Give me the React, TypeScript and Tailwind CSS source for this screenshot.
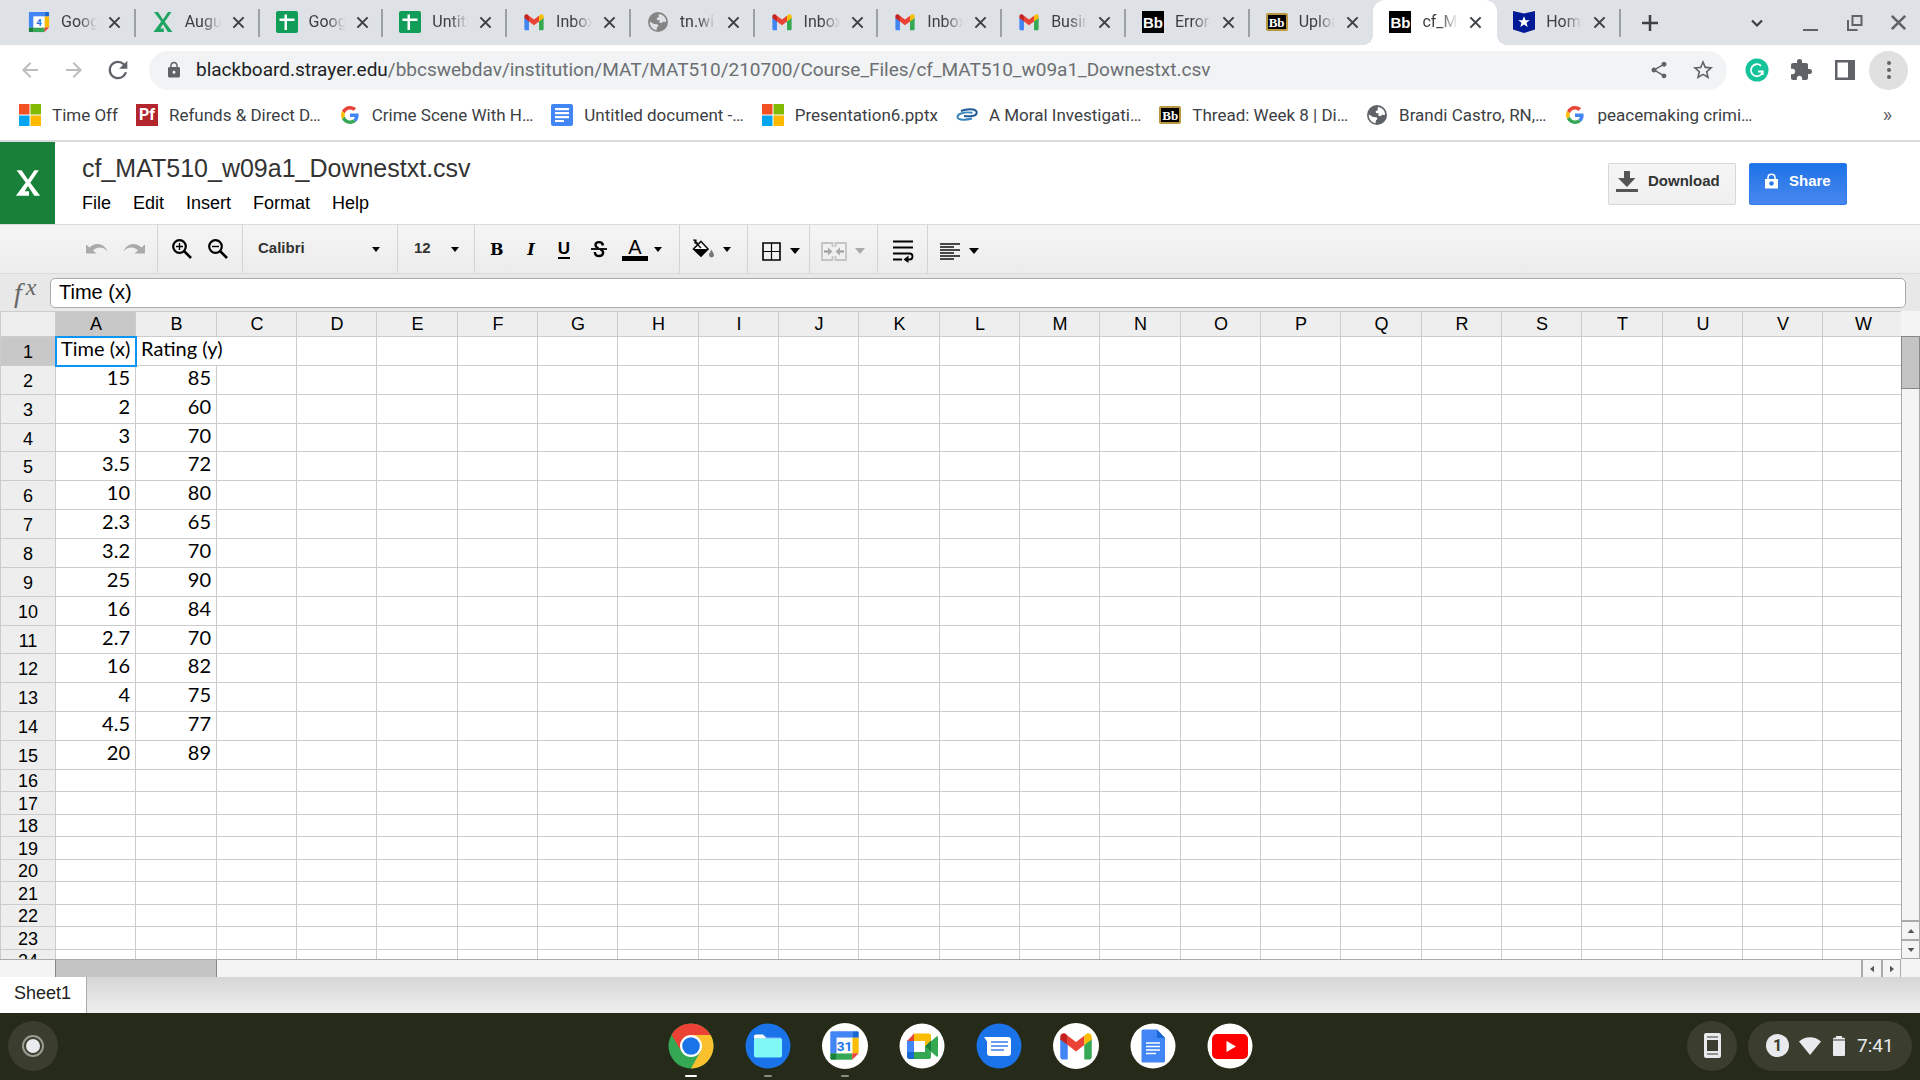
import React from 'react';
import {
  MdShare,
  MdStarBorder,
  MdExtension,
  MdLock,
  MdRefresh,
  MdArrowBack,
  MdArrowForward,
} from 'react-icons/md';

const sans = "font-['Liberation_Sans',sans-serif]";
const roboto = 'font-[Roboto,sans-serif]';

/* ---------- logos ---------- */

function CalendarLogo({ day, className }: { day: string; className: string }) {
  return (
    <svg viewBox="0 0 24 24" className={className} aria-hidden="true">
      <path d="M2 1h16v5H6v12H1V2a1 1 0 0 1 1-1z" fill="#4285f4" />
      <path d="M18 1h4a1 1 0 0 1 1 1v4h-5z" fill="#1967d2" />
      <path d="M18 6h5v12h-5z" fill="#fbbc04" />
      <path d="M6 18h12v5H6z" fill="#34a853" />
      <path d="M1 18h5v5H2a1 1 0 0 1-1-1z" fill="#188038" />
      <path d="M18 18h5l-5 5z" fill="#ea4335" />
      <path d="M6 6h12v12H6z" fill="#fff" />
      <text x="12" y="16" textAnchor="middle" fontFamily="Roboto" fontWeight="700" fontSize="10.5" fill="#1a73e8">
        {day}
      </text>
    </svg>
  );
}

function GmailLogo({ className }: { className: string }) {
  return (
    <svg viewBox="0 0 24 24" className={className} aria-hidden="true">
      <path d="M1.500 7v12.500c0 .8.7 1.500 1.500 1.500h3.500V11z" fill="#4285f4" />
      <path d="M22.500 7v12.500c0 .8-.7 1.500-1.500 1.500h-3.500V11z" fill="#34a853" />
      <path d="M6.500 5.200L12 9.400l5.500-4.200v6.200L12 15.600l-5.500-4.200z" fill="#ea4335" />
      <path d="M1.500 6c0-2.700 3-3.500 4.500-1.200l.5.4v6.200L1.500 7.700z" fill="#c5221f" />
      <path d="M22.500 6c0-2.700-3-3.500-4.500-1.200l-.5.4v6.200l5-3.700z" fill="#fbbc04" />
    </svg>
  );
}

function SheetsLogo({ className }: { className: string }) {
  return (
    <svg viewBox="0 0 22 22" className={className} aria-hidden="true">
      <rect width="22" height="22" rx="2" fill="#0f9d58" />
      <path d="M3.500 7.500h15v2.500h-15zM8.500 3.500H11v15.500H8.500z" fill="#fff" />
    </svg>
  );
}

function ExcelMark({ color, className }: { color: string; className: string }) {
  return (
    <svg viewBox="0 0 22 22" className={className} aria-hidden="true">
      <path
        d="M2 1h4l5 7.500L16 1h3.500l-6.700 9.800L20.500 21h-4.600L11 13.300 8.400 17.400h3.400V21H1.500l7.700-10.400z"
        fill={color}
      />
    </svg>
  );
}

function GlobeIcon({ className, land }: { className: string; land: string }) {
  return (
    <svg viewBox="0 0 20 20" className={className} aria-hidden="true">
      <circle cx="10" cy="10" r="10" fill="currentColor" />
      <path d="M1.800 9.500L6 12l3.500.2 1 1.800-1.500 1.200-.5 3C4.500 17.500 1.500 14 1.800 9.500z" fill={land} />
      <path d="M11.500 1.900c3 .5 5.200 2.400 6.200 5l.4 3.100-3.100-.3-1.500 1.500-2.500-1L12 8.500 9 8 8.700 6l2.300-.7-.5-2z" fill={land} />
    </svg>
  );
}

function WindowsLogo() {
  return (
    <svg viewBox="0 0 22 22" className="size-[22px]" aria-hidden="true">
      <path d="M0 0h10.500v10.500H0z" fill="#f25022" />
      <path d="M11.500 0H22v10.500H11.500z" fill="#7fba00" />
      <path d="M0 11.500h10.500V22H0z" fill="#00a4ef" />
      <path d="M11.500 11.500H22V22H11.500z" fill="#ffb900" />
    </svg>
  );
}

function GoogleLogo() {
  return (
    <svg viewBox="0 0 48 48" className="size-[18px]" aria-hidden="true">
      <path fill="#EA4335" d="M24 9.500c3.540 0 6.710 1.220 9.210 3.600l6.850-6.850C35.900 2.380 30.470 0 24 0 14.620 0 6.510 5.380 2.560 13.220l7.980 6.190C12.430 13.720 17.740 9.500 24 9.500z" />
      <path fill="#4285F4" d="M46.980 24.550c0-1.570-.15-3.090-.38-4.550H24v9.020h12.940c-.58 2.960-2.260 5.480-4.780 7.180l7.730 6c4.510-4.180 7.090-10.360 7.090-17.650z" />
      <path fill="#FBBC05" d="M10.530 28.590c-.48-1.450-.76-2.990-.76-4.590s.27-3.140.76-4.590l-7.980-6.190C.92 16.460 0 20.120 0 24c0 3.880.92 7.540 2.560 10.780l7.970-6.190z" />
      <path fill="#34A853" d="M24 48c6.480 0 11.930-2.130 15.890-5.810l-7.730-6c-2.150 1.450-4.920 2.300-8.160 2.300-6.260 0-11.570-4.220-13.470-9.910l-7.980 6.190C6.510 42.620 14.620 48 24 48z" />
    </svg>
  );
}

function DocsMark() {
  return (
    <svg viewBox="0 0 22 22" className="size-[22px]" aria-hidden="true">
      <rect width="22" height="22" rx="2" fill="#4285f4" />
      <path d="M4 4h14v2.200H4zM4 8h14v2.200H4zM4 12h14v2.200H4zM4 16h9v2H4z" fill="#fff" />
    </svg>
  );
}

function Swoosh() {
  return (
    <svg viewBox="0 0 22 22" className="size-[22px]" fill="none" aria-hidden="true">
      <path d="M5 7c4-1.500 8-2 12-1.500 5.500 1 4.500 6-.5 6.500-3 .4-6 .3-8.500 0" stroke="#1f5a96" strokeWidth="1.900" />
      <path d="M16.500 8.800C12 8 8 8.500 5 9.500c-5 1.700-4.500 5.500 0 6 4 .5 7.500 0 11-1" stroke="#3d86bd" strokeWidth="1.900" />
    </svg>
  );
}

function BbBlack() {
  return (
    <span className={`${sans} flex size-[22px] items-center justify-center bg-black text-[15px] leading-none font-bold text-white`}>
      Bb
    </span>
  );
}

function BbGold() {
  return (
    <span className="flex h-[18px] w-[22px] items-center justify-center rounded-xs border-2 border-[#b8973f] bg-black font-['Liberation_Serif',serif] text-[13px] leading-none font-bold text-white">
      Bb
    </span>
  );
}

function PfMark() {
  return (
    <span className={`${roboto} flex size-[22px] items-center justify-center bg-[#b3262e] text-base leading-none font-bold text-white`}>
      Pf
    </span>
  );
}

function StarBadge() {
  return (
    <svg viewBox="0 0 22 22" className="size-[22px]" aria-hidden="true">
      <path d="M0 0l11 2.500L22 0v18.500L11 22 0 18.500z" fill="#001a96" />
      <path d="M11 5.200l1.600 4h4.200l-3.300 2.600 1.200 4.200L11 13.500 7.300 16l1.200-4.200-3.300-2.600h4.200z" fill="#fff" />
    </svg>
  );
}

function CloseIcon({ className }: { className: string }) {
  return (
    <svg viewBox="0 0 14 14" className={className} fill="none" stroke="currentColor" strokeWidth="2.200" aria-hidden="true">
      <path d="M1.500 1.500l11 11M12.500 1.500l-11 11" />
    </svg>
  );
}

/* ---------- tab strip ---------- */

type Tab = { title: string; icon: React.ReactNode; active?: boolean };

const tabs: Tab[] = [
  { title: 'Goog', icon: <CalendarLogo day="4" className="size-6" /> },
  { title: 'Augu', icon: <ExcelMark color="#1fa463" className="size-[22px]" /> },
  { title: 'Goog', icon: <SheetsLogo className="size-[22px]" /> },
  { title: 'Untitl', icon: <SheetsLogo className="size-[22px]" /> },
  { title: 'Inbox', icon: <GmailLogo className="size-[22px]" /> },
  { title: 'tn.wi', icon: <GlobeIcon className="size-5 text-[#858585]" land="#dee1e6" /> },
  { title: 'Inbox', icon: <GmailLogo className="size-[22px]" /> },
  { title: 'Inbox', icon: <GmailLogo className="size-[22px]" /> },
  { title: 'Busin', icon: <GmailLogo className="size-[22px]" /> },
  { title: 'Error', icon: <BbBlack /> },
  { title: 'Uploa', icon: <BbGold /> },
  { title: 'cf_M', icon: <BbBlack />, active: true },
  { title: 'Hom', icon: <StarBadge /> },
];

function TabStrip() {
  return (
    <div className="flex h-[45px] shrink-0 items-stretch bg-[#dee1e6] pl-3">
      <div role="tablist" className="flex w-[1609px] shrink">
        {tabs.map((t, i) => (
          <div
            key={i}
            role="tab"
            aria-selected={!!t.active}
            className={
              t.active
                ? 'relative flex min-w-0 flex-1 items-center rounded-t-xl bg-white pb-px pl-4'
                : 'relative flex min-w-0 flex-1 items-center pb-px pl-4'
            }
          >
            <span className="flex size-[22px] shrink-0 items-center justify-center">{t.icon}</span>
            <span className="ml-[11px] w-9 [mask-image:linear-gradient(to_right,black_50%,transparent)] text-base leading-6 whitespace-nowrap text-[#3c4043]">
              {t.title}
            </span>
            <button aria-label={`Close ${t.title}`} className="ml-[11px] text-[#3c4043]">
              <CloseIcon className="size-[13px]" />
            </button>
            {t.active ? (
              <>
                <span className="absolute bottom-0 -left-2.5 size-2.5 bg-[radial-gradient(circle_at_top_left,transparent_10px,white_10px)]" />
                <span className="absolute -right-2.5 bottom-0 size-2.5 bg-[radial-gradient(circle_at_top_right,transparent_10px,white_10px)]" />
              </>
            ) : (
              tabs[i + 1]?.active || <span className="absolute top-[9px] right-0 h-7 w-0.5 bg-[#9aa0a6]" />
            )}
          </div>
        ))}
      </div>
      <button aria-label="New tab" className="ml-5 text-[#3c4043]">
        <svg viewBox="0 0 18 18" className="size-[18px]" stroke="currentColor" strokeWidth="2.500">
          <path d="M9 1v16M1 9h16" />
        </svg>
      </button>
      <div className="ml-auto flex items-center gap-7 pr-[13px] text-[#5f6368]">
        <button aria-label="Search tabs" className="text-[#3c4043]">
          <svg viewBox="0 0 18 18" className="size-[18px]" fill="none" stroke="currentColor" strokeWidth="2.200">
            <path d="M4 6.500l5 5 5-5" />
          </svg>
        </button>
        <button aria-label="Minimize" className="ml-1.5">
          <svg viewBox="0 0 18 18" className="size-[18px]" stroke="currentColor" strokeWidth="2">
            <path d="M3 16h15" />
          </svg>
        </button>
        <button aria-label="Restore" className="-mr-0.5">
          <svg viewBox="0 0 18 18" className="size-[18px]" fill="none" stroke="currentColor" strokeWidth="2">
            <path d="M6.500 2h9v9h-9zM2 6v10h9.500" />
          </svg>
        </button>
        <button aria-label="Close window">
          <CloseIcon className="size-[17px]" />
        </button>
      </div>
    </div>
  );
}

/* ---------- address bar ---------- */

function AddressBar() {
  return (
    <div className="flex h-[51px] shrink-0 items-center bg-white pr-3 pb-px pl-[18px] text-[#5f6368]">
      <button aria-label="Back" className="text-[#babcbe]">
        <MdArrowBack className="size-6" />
      </button>
      <button aria-label="Forward" className="ml-5 text-[#babcbe]">
        <MdArrowForward className="size-6" />
      </button>
      <button aria-label="Reload" className="ml-[18px]">
        <MdRefresh className="size-7" />
      </button>
      <div className="ml-[17px] flex h-[39px] flex-1 items-center rounded-full bg-[#f1f3f4] pr-3 pl-4">
        <MdLock className="size-[18px]" />
        <a href="#" className="ml-[13px] flex-1 text-[19px] leading-6 text-[#6b6f73]">
          <span className="text-[#202124]">blackboard.strayer.edu</span>
          /bbcswebdav/institution/MAT/MAT510/210700/Course_Files/cf_MAT510_w09a1_Downestxt.csv
        </a>
        <button aria-label="Share page">
          <MdShare className="size-5" />
        </button>
        <button aria-label="Bookmark page" className="ml-[22px]">
          <MdStarBorder className="size-6" />
        </button>
      </div>
      <button aria-label="Grammarly" className="ml-[18px]">
        <svg viewBox="0 0 24 24" className="size-6" fill="none">
          <circle cx="12" cy="12" r="11.500" fill="#15c39a" />
          <path d="M16 7.800A6 6 0 1 0 17.800 13.500H13M17.800 13v4" stroke="#fff" strokeWidth="1.800" />
        </svg>
      </button>
      <button aria-label="Extensions" className="ml-5">
        <MdExtension className="size-6" />
      </button>
      <button aria-label="Side panel" className="ml-[22px]">
        <svg viewBox="0 0 20 20" className="size-5" aria-hidden="true">
          <path d="M0 0h20v20H0zM2.500 2.500v15H13v-15z" fill="currentColor" fillRule="evenodd" />
        </svg>
      </button>
      <button aria-label="Menu" className="ml-3.5 flex size-[39px] items-center justify-center rounded-full bg-[#e0e0e0]">
        <svg viewBox="0 0 6 20" className="h-5 w-1.5" fill="currentColor">
          <circle cx="3" cy="3" r="2" />
          <circle cx="3" cy="10" r="2" />
          <circle cx="3" cy="17" r="2" />
        </svg>
      </button>
    </div>
  );
}

const bookmarks: { title: string; icon: React.ReactNode }[] = [
  { title: 'Time Off', icon: <WindowsLogo /> },
  { title: 'Refunds & Direct D…', icon: <PfMark /> },
  { title: 'Crime Scene With H…', icon: <GoogleLogo /> },
  { title: 'Untitled document -…', icon: <DocsMark /> },
  { title: 'Presentation6.pptx', icon: <WindowsLogo /> },
  { title: 'A Moral Investigati…', icon: <Swoosh /> },
  { title: 'Thread: Week 8 | Di…', icon: <BbGold /> },
  { title: 'Brandi Castro, RN,…', icon: <GlobeIcon className="size-5 text-[#5f6368]" land="#fff" /> },
  { title: 'peacemaking crimi…', icon: <GoogleLogo /> },
];

function BookmarkBar() {
  return (
    <nav aria-label="Bookmarks" className="flex h-[46px] shrink-0 items-center gap-[18px] border-b-2 border-[#dadbdc] bg-white pr-7 pb-1.5 pl-[19px]">
      {bookmarks.map((b, i) => (
        <a key={i} href="#" className="flex items-center gap-[11px] text-[17px] leading-6 whitespace-nowrap text-[#3c4043]">
          <span className="flex size-[22px] items-center justify-center">{b.icon}</span>
          {b.title}
        </a>
      ))}
      <button aria-label="More bookmarks" className="ml-auto text-xl leading-6 text-[#5f6368]">
        »
      </button>
    </nav>
  );
}

/* ---------- document header ---------- */

function DocHeader() {
  return (
    <header className={`${sans} flex h-[82px] shrink-0 bg-white`}>
      <div className="flex w-[55px] items-center justify-center bg-[#188038]">
        <ExcelMark color="#fff" className="h-8 w-7" />
      </div>
      <div className="ml-[27px] flex-1 pt-2.5">
        <h1 className="text-[25px] leading-8 text-[#333]">cf_MAT510_w09a1_Downestxt.csv</h1>
        <nav className="mt-[7px] flex gap-[22px] text-lg leading-6 text-black">
          {['File', 'Edit', 'Insert', 'Format', 'Help'].map((m) => (
            <button key={m}>{m}</button>
          ))}
        </nav>
      </div>
      <div className="mr-[73px] flex gap-[13px] pt-[21px] text-[15px] leading-5 font-bold">
        <button className="flex h-[42px] w-32 items-center gap-2.5 rounded-xs border border-[#d8d8d8] bg-linear-to-b from-[#f5f5f5] to-[#f0f0f0] pb-1.5 pl-[7px] text-[#333]">
          <svg viewBox="0 0 22 22" className="size-[22px]" fill="#555" aria-hidden="true">
            <path d="M8 1h6v7h5.500L11 17 2 8h6zM0 19h22v3H0z" />
          </svg>
          Download
        </button>
        <button className="flex h-[42px] w-[98px] items-center gap-[11px] rounded-xs border border-[#3079ed] bg-linear-to-b from-[#1a73e8] to-[#4787ed] pb-1.5 pl-[15px] text-white">
          <svg viewBox="0 0 13 16" className="h-4 w-[13px]" aria-hidden="true">
            <path d="M3 7V4.500C3 0 10 0 10 4.500V7" fill="none" stroke="#fff" strokeWidth="1.500" />
            <path d="M0 6h13v9.500H0z" fill="#fff" />
            <circle cx="6.500" cy="10.500" r="2.300" fill="#2f7bea" />
          </svg>
          Share
        </button>
      </div>
    </header>
  );
}

/* ---------- toolbar ---------- */

function Caret({ className }: { className: string }) {
  return (
    <svg viewBox="0 0 10 6" className={className} fill="currentColor" aria-hidden="true">
      <path d="M0 0h10L5 6z" />
    </svg>
  );
}

function UndoArrow({ className }: { className: string }) {
  return (
    <svg viewBox="0 0 22 12" className={className} fill="#aaa" aria-hidden="true">
      <path d="M0 1.500l3.500 3C9-.8 17.500-.5 21.500 8 16.500 3.500 11 3.500 7 7.500l3.500 3H0z" />
    </svg>
  );
}

function Magnifier({ sign }: { sign: string }) {
  return (
    <svg viewBox="0 0 20 20" className="size-5" fill="none" stroke="currentColor" aria-hidden="true">
      <circle cx="7.500" cy="7.500" r="6.300" strokeWidth="2.200" />
      <path d="M12 12l7 7" strokeWidth="2.600" />
      <path d={sign} strokeWidth="1.400" />
    </svg>
  );
}

const group = 'flex h-full items-center border-r border-[#d4d4d4]';

function Toolbar() {
  return (
    <div
      role="toolbar"
      className={`${sans} flex h-[50px] shrink-0 items-center border-y border-[#dcdcdc] bg-linear-to-b from-[#f5f5f5] to-[#ececec] text-[15px] leading-5 font-bold text-black`}
    >
      <div className={`${group} w-[158px] gap-[15px] pl-[86px]`}>
        <button aria-label="Undo">
          <UndoArrow className="h-3 w-[22px]" />
        </button>
        <button aria-label="Redo">
          <UndoArrow className="h-3 w-[22px] -scale-x-100" />
        </button>
      </div>
      <div className={`${group} w-[85px] gap-4 pl-3.5`}>
        <button aria-label="Zoom in">
          <Magnifier sign="M4 7.500h7M7.500 4v7" />
        </button>
        <button aria-label="Zoom out">
          <Magnifier sign="M4 7.500h7" />
        </button>
      </div>
      <div className={`${group} w-[155px] pb-0.5 pl-[15px]`}>
        <button className="flex flex-1 items-center justify-between pr-[17px] text-[#333]">
          Calibri
          <Caret className="mt-0.5 h-[5px] w-2 text-black" />
        </button>
      </div>
      <div className={`${group} w-[77px] pb-0.5 pl-4`}>
        <button className="flex flex-1 items-center justify-between pr-[15px] text-[#333]">
          12
          <Caret className="mt-0.5 h-[5px] w-2 text-black" />
        </button>
      </div>
      <div className={`${group} w-[205px] pl-[15px]`}>
        <button aria-label="Bold" className="w-[18px] pt-0.5 text-left font-['DejaVu_Serif',serif] text-base">
          B
        </button>
        <button aria-label="Italic" className="ml-[13px] w-5 pt-0.5 text-center font-['DejaVu_Serif',serif] text-base italic">
          I
        </button>
        <button aria-label="Underline" className="ml-[15px] flex w-4 flex-col items-center pt-0.5">
          <span className="border-b-2 border-black text-[17px] leading-4">U</span>
        </button>
        <button aria-label="Strikethrough" className="ml-[18px] w-[18px] text-center">
          <svg viewBox="0 0 18 18" className="size-[18px]" fill="none" stroke="currentColor" strokeWidth="2.400">
            <path d="M13 5.500C12.500 1 5.500 1.200 5.500 5c0 1.500 1 2.500 3 3.300M10.500 9.500c4.500 2 2.500 6.500-1.500 6.500-2.500 0-4-1.500-4.200-4" />
            <path d="M1 9h16" strokeWidth="1.800" />
          </svg>
        </button>
        <button aria-label="Text color" className="ml-3.5 flex items-center gap-1.5">
          <span className="w-[26px] border-b-5 border-black text-center text-xl leading-[18px] font-normal">A</span>
          <Caret className="h-[5px] w-2" />
        </button>
      </div>
      <div className={`${group} w-[68px] pl-[11px]`}>
        <button aria-label="Fill color" className="flex items-center gap-2">
          <svg viewBox="0 0 24 22" className="h-[22px] w-6" aria-hidden="true">
            <path d="M2.500 1.500L8 7M5 1.500l-1 4" stroke="#111" strokeWidth="1.600" />
            <path d="M10 3.500l7 7.500-7 7-7.500-7z" fill="#fff" stroke="#111" strokeWidth="1.600" />
            <path d="M2 11h15.500L10 19z" fill="#000" />
            <path d="M4 4l6 6" stroke="#111" strokeWidth="1.500" />
            <path d="M20.500 11.500c1.500 3 2.500 4.200 2.500 5.500a2.500 2.500 0 0 1-5 0c0-1.300 1-2.500 2.500-5.500z" fill="#777" />
          </svg>
          <Caret className="h-[5px] w-2" />
        </button>
      </div>
      <div className={`${group} w-[62px] pt-1 pl-3.5`}>
        <button aria-label="Borders" className="flex items-center gap-[9px]">
          <svg viewBox="0 0 19 19" className="size-[19px]" fill="none" stroke="#000" aria-hidden="true">
            <path d="M1 1h17v17H1z" strokeWidth="1.600" />
            <path d="M9.500 1v17M1 9.500h17" strokeWidth="1.200" />
          </svg>
          <Caret className="h-1.5 w-2.5" />
        </button>
      </div>
      <div className={`${group} w-[68px] pt-1 pl-[11px] text-[#aaa]`}>
        <button aria-label="Merge cells" className="flex items-center gap-2">
          <svg viewBox="0 0 26 19" className="h-[19px] w-[26px]" fill="none" stroke="#c4c4c4" strokeWidth="1.800" aria-hidden="true">
            <path d="M11.500 5V1H1v17h10.500v-4M14.500 5V1H25v17H14.500v-4" />
            <path d="M3 9.500h4M23 9.500h-4" stroke="#999" />
            <path d="M7 5.500l4.500 4L7 13.500zM19 5.500l-4.500 4 4.500 4z" fill="#aaa" stroke="none" />
          </svg>
          <Caret className="h-1.5 w-2.5" />
        </button>
      </div>
      <div className={`${group} w-[50px] pt-1 pl-[15px]`}>
        <button aria-label="Wrap text">
          <svg viewBox="0 0 21 23" className="h-[23px] w-[21px]" fill="none" stroke="#000" strokeWidth="1.800" aria-hidden="true">
            <path d="M0 1.500h20M0 7.500h20M0 13.500h16.500c4 0 4 6 0 6H14M0 19.500h9" />
            <path d="M15.500 15.500v7.500L10.500 19.500z" fill="#000" stroke="none" />
          </svg>
        </button>
      </div>
      <div className="flex h-full items-center pt-1 pl-3">
        <button aria-label="Align" className="flex items-center gap-[9px]">
          <svg viewBox="0 0 20 17" className="h-[17px] w-5" stroke="#111" strokeWidth="1.600" aria-hidden="true">
            <path d="M0 1h20M0 4h14M0 7h20M0 10h14M0 13h20M0 16h14" />
          </svg>
          <Caret className="h-1.5 w-2.5" />
        </button>
      </div>
    </div>
  );
}

function FormulaBar() {
  return (
    <div className={`${sans} flex h-[37px] shrink-0 items-center bg-[#e8e8e8] pr-3.5`}>
      <label htmlFor="formula" className="flex w-[50px] gap-1 pl-3.5 font-['Liberation_Serif',serif] text-[28px] leading-8 text-[#666] italic">
        <span>f</span>
        <span className="text-2xl leading-5">x</span>
      </label>
      <input
        id="formula"
        defaultValue="Time (x)"
        className="h-[30px] min-w-0 flex-1 rounded-[5px] border border-[#aaa] bg-white px-2 text-xl leading-6 text-black"
      />
    </div>
  );
}

/* ---------- sheet ---------- */

const columns = 'ABCDEFGHIJKLMNOPQRSTUVW'.split('');

const data: [string, string][] = [
  ['Time (x)', 'Rating (y)'],
  ['15', '85'],
  ['2', '60'],
  ['3', '70'],
  ['3.5', '72'],
  ['10', '80'],
  ['2.3', '65'],
  ['3.2', '70'],
  ['25', '90'],
  ['16', '84'],
  ['2.7', '70'],
  ['16', '82'],
  ['4', '75'],
  ['4.5', '77'],
  ['20', '89'],
];

function rowHeight(r: number) {
  if (r > 15) return r % 2 ? 'h-[23px]' : 'h-[22px]';
  return r === 4 || r === 11 ? 'h-7' : 'h-[29px]';
}

function cellClass(r: number, c: number) {
  if (r === 1 && c === 0) return 'border-r border-b border-[#ccc] pl-[5px] outline-2 -outline-offset-1 outline-[#0b96f5] relative';
  if (r === 1 && c === 1) return 'border-b border-[#ccc] pl-[5px] overflow-visible';
  if (c < 2) return 'border-r border-b border-[#ccc] pr-[5px] text-right';
  return 'border-r border-b border-[#ccc]';
}

function Sheet() {
  return (
    <div className="flex min-h-0 flex-1">
      <div className="flex min-w-0 flex-1 flex-col">
        <div className="min-h-0 flex-1 overflow-hidden border-b border-[#aaa] bg-white">
          <table className={`${sans} w-px table-fixed border-separate border-spacing-0 text-lg leading-5 text-black`}>
            <colgroup>
              <col className="w-14" />
              {columns.map((c, i) => (
                <col key={c} className={i % 3 === 1 ? 'w-[81px]' : 'w-20'} />
              ))}
            </colgroup>
            <thead>
              <tr className="h-[26px] bg-[#eee]">
                <td className="border border-[#ccc]" />
                {columns.map((c, i) => (
                  <th
                    key={c}
                    scope="col"
                    className={
                      i === 0
                        ? 'border-y border-r border-[#ccc] bg-[#c8c8c8] p-0 pl-px font-normal'
                        : 'border-y border-r border-[#ccc] p-0 pl-px font-normal'
                    }
                  >
                    {c}
                  </th>
                ))}
              </tr>
            </thead>
            <tbody>
              {Array.from({ length: 24 }, (_, i) => i + 1).map((r) => (
                <tr key={r} className={rowHeight(r)}>
                  <th
                    scope="row"
                    className={
                      r === 1
                        ? 'border-x border-b border-[#ccc] bg-[#c8c8c8] p-0 pt-0.5 font-normal'
                        : r <= 15
                          ? 'border-x border-b border-[#ccc] bg-[#eee] p-0 pt-0.5 font-normal'
                          : 'border-x border-b border-[#ccc] bg-[#eee] p-0 pt-px font-normal'
                    }
                  >
                    {r}
                  </th>
                  {columns.map((c, ci) => (
                    <td
                      key={c}
                      className={
                        r > 15
                          ? 'border-r border-b border-[#ccc] p-0'
                          : `${cellClass(r, ci)} pt-0 pb-1.5 font-[Lato,sans-serif] text-xl leading-5 whitespace-nowrap`
                      }
                    >
                      {data[r - 1]?.[ci]}
                    </td>
                  ))}
                </tr>
              ))}
            </tbody>
          </table>
        </div>
        <div className="flex h-[17px] shrink-0 bg-[#f4f4f4] pl-[55px]">
          <div className="w-[162px] border-x border-[#888] bg-[#c4c4c4]" />
          <button aria-label="Scroll left" className="ml-auto flex w-5 items-center justify-center border-l-2 border-[#aaa] text-[#555]">
            <Caret className="h-1 w-2 rotate-90" />
          </button>
          <button aria-label="Scroll right" className="flex w-5 items-center justify-center border-r border-l-2 border-[#aaa] text-[#555]">
            <Caret className="h-1 w-2 -rotate-90" />
          </button>
        </div>
      </div>
      <div className="flex w-[19px] shrink-0 flex-col bg-[#f4f4f4] pt-[25px] pb-[18px]">
        <div className="h-[53px] border border-[#888] bg-[#c4c4c4]" />
        <div className="flex-1 border-x border-[#aaa]" />
        <button aria-label="Scroll up" className="flex h-5 items-center justify-center border border-t-2 border-[#aaa] text-[#555]">
          <Caret className="h-1 w-2 rotate-180" />
        </button>
        <button aria-label="Scroll down" className="flex h-[19px] items-center justify-center border border-[#aaa] text-[#555]">
          <Caret className="h-1 w-2" />
        </button>
      </div>
    </div>
  );
}

function SheetTabs() {
  return (
    <div className={`${sans} flex h-9 shrink-0 bg-linear-to-b from-[#d6d6d6] to-[#efefef]`}>
      <button className="border-r border-[#aaa] bg-white pr-[15px] pb-1 pl-3.5 text-lg leading-6 text-[#222]">Sheet1</button>
    </div>
  );
}

/* ---------- shelf ---------- */

function ChromeIcon() {
  return (
    <svg viewBox="0 0 46 46" className="size-[46px]" aria-hidden="true">
      <circle cx="23" cy="23" r="22.500" fill="#34a853" />
      <path d="M23 12h19.600A22.500 22.500 0 0 1 23 45.500L32.500 28.500z" fill="#fbc02d" />
      <path d="M3.500 11.800A22.500 22.500 0 0 1 42.600 12H23L13.500 28.500z" fill="#ea4335" />
      <circle cx="23" cy="23" r="11" fill="#fff" />
      <circle cx="23" cy="23" r="8.800" fill="#1a73e8" />
    </svg>
  );
}

function FilesIcon() {
  return (
    <svg viewBox="0 0 46 46" className="size-[46px]" aria-hidden="true">
      <circle cx="23" cy="23" r="22.500" fill="#1a73e8" />
      <path d="M11 12h8l3 2.500h13a2 2 0 0 1 2 2V20H9v-6a2 2 0 0 1 2-2z" fill="#8ab4f8" />
      <path d="M11 11.500h7l3 4H9v-2a2 2 0 0 1 2-2z" fill="#fff" />
      <rect x="9" y="15.500" width="28" height="19" rx="2" fill="#80f8f8" />
    </svg>
  );
}

function MeetIcon() {
  return (
    <svg viewBox="0 0 46 46" className="size-[46px]" aria-hidden="true">
      <circle cx="23" cy="23" r="22.500" fill="#fff" />
      <path d="M8 18l7-7.500V18z" fill="#ea4335" />
      <path d="M8 18h7v11H8z" fill="#4285f4" />
      <path d="M8 29h7v7h-5a2 2 0 0 1-2-2z" fill="#1967d2" />
      <path d="M15 10.500h15a2 2 0 0 1 2 2V19l-6 4.500V18H15z" fill="#fbbc04" />
      <path d="M15 29h11v-5.500l6 5V34a2 2 0 0 1-2 2H15z" fill="#34a853" />
      <path d="M26 23.500l11.500-10c.7-.5 1.500-.3 1.500.8v18.500c0 1-.8 1.300-1.500.7z" fill="#34a853" />
      <path d="M26 23.500l6-6v11z" fill="#188038" />
    </svg>
  );
}

function MessagesIcon() {
  return (
    <svg viewBox="0 0 46 46" className="size-[46px]" aria-hidden="true">
      <circle cx="23" cy="23" r="22.500" fill="#1a73e8" />
      <path d="M8 14h24a3 3 0 0 1 3 3v13a3 3 0 0 1-3 3H14a3 3 0 0 1-3-3V18.500z" fill="#fff" />
      <path d="M15 19h17M15 23h17M15 27h13" stroke="#6d9eeb" strokeWidth="1.800" />
    </svg>
  );
}

function DocsIcon() {
  return (
    <svg viewBox="0 0 46 46" className="size-[46px]" aria-hidden="true">
      <circle cx="23" cy="23" r="22.500" fill="#fff" />
      <path d="M13 6.500h14l8 8.500v23a1.500 1.500 0 0 1-1.500 1.500h-20A1.500 1.500 0 0 1 11.500 38V8A1.500 1.500 0 0 1 13 6.500z" fill="#4285f4" />
      <path d="M27 6.500l8 8.500h-8z" fill="#1967d2" />
      <path d="M16 20h14M16 23.500h14M16 27h14M16 30.500h10" stroke="#fff" strokeWidth="1.600" />
    </svg>
  );
}

function YoutubeIcon() {
  return (
    <svg viewBox="0 0 46 46" className="size-[46px]" aria-hidden="true">
      <circle cx="23" cy="23" r="22.500" fill="#fff" />
      <rect x="5" y="11" width="36" height="25" rx="5" fill="#f00" />
      <path d="M19.500 18l9.500 5.500-9.500 5.500z" fill="#fff" />
    </svg>
  );
}

const apps: { name: string; icon: React.ReactNode; mark?: string }[] = [
  { name: 'Chrome', icon: <ChromeIcon />, mark: 'w-3 bg-white' },
  { name: 'Files', icon: <FilesIcon />, mark: 'w-2 bg-[#8a8c82]' },
  {
    name: 'Calendar',
    icon: (
      <span className="flex size-[46px] items-center justify-center rounded-full bg-white">
        <CalendarLogo day="31" className="size-[31px]" />
      </span>
    ),
    mark: 'w-2 bg-[#8a8c82]',
  },
  { name: 'Meet', icon: <MeetIcon /> },
  { name: 'Messages', icon: <MessagesIcon /> },
  {
    name: 'Gmail',
    icon: (
      <span className="flex size-[46px] items-center justify-center rounded-full bg-white">
        <GmailLogo className="size-9" />
      </span>
    ),
  },
  { name: 'Docs', icon: <DocsIcon /> },
  { name: 'YouTube', icon: <YoutubeIcon /> },
];

function Shelf() {
  return (
    <footer className="flex h-[67px] shrink-0 items-center justify-between bg-[#262a18] px-2 pb-0.5">
      <div className="flex flex-1">
        <button aria-label="Launcher" className="flex size-[50px] items-center justify-center rounded-full bg-[#3b3e2e]">
          <span className="flex size-[22px] items-center justify-center rounded-full border-2 border-[#9a9c93]">
            <span className="size-3.5 rounded-full bg-[#e8eaed]" />
          </span>
        </button>
      </div>
      <div className="flex gap-[31px]">
        {apps.map((a) => (
          <button key={a.name} aria-label={a.name} className="relative">
            {a.icon}
            {a.mark && <span className={`${a.mark} absolute inset-x-0 top-[52px] mx-auto h-0.5 rounded-full`} />}
          </button>
        ))}
      </div>
      <div className="flex flex-1 justify-end gap-[11px]">
        <button aria-label="Phone hub" className="flex size-[50px] items-center justify-center rounded-full bg-[#3b3e2e]">
          <svg viewBox="0 0 17 25" className="h-[25px] w-[17px]" aria-hidden="true">
            <path
              d="M2 0h13a2 2 0 0 1 2 2v21a2 2 0 0 1-2 2H2a2 2 0 0 1-2-2V2a2 2 0 0 1 2-2zM3 7v11h11V7zM3 3.500v1h11v-1zM3 20.500v1h11v-1z"
              fill="#e8eaed"
              fillRule="evenodd"
            />
          </svg>
        </button>
        <button className="flex h-[50px] w-[164px] items-center rounded-full bg-[#3b3e2e] pl-[18px] text-[#e8eaed]">
          <span className="flex size-[23px] items-center justify-center rounded-full bg-[#e8eaed] text-base leading-none font-bold text-[#3b3e2e]">
            1
          </span>
          <svg viewBox="0 0 22 18" className="ml-2.5 h-[18px] w-[22px]" fill="currentColor" aria-hidden="true">
            <path d="M0 4.500C6-1.300 16-1.300 22 4.500L11 18z" />
          </svg>
          <svg viewBox="0 0 12 20" className="ml-3 h-5 w-3" fill="currentColor" aria-hidden="true">
            <path d="M3 0h6v1.800h2a1 1 0 0 1 1 1V3.500H0v-.7a1 1 0 0 1 1-1h2zM0 4.500h12V19a1 1 0 0 1-1 1H1a1 1 0 0 1-1-1z" />
          </svg>
          <span className="ml-3 text-[19px] leading-6">7:41</span>
        </button>
      </div>
    </footer>
  );
}

export default function App() {
  return (
    <div className={`${roboto} flex h-screen flex-col overflow-hidden bg-white`}>
      <TabStrip />
      <AddressBar />
      <BookmarkBar />
      <DocHeader />
      <Toolbar />
      <FormulaBar />
      <Sheet />
      <SheetTabs />
      <Shelf />
    </div>
  );
}
